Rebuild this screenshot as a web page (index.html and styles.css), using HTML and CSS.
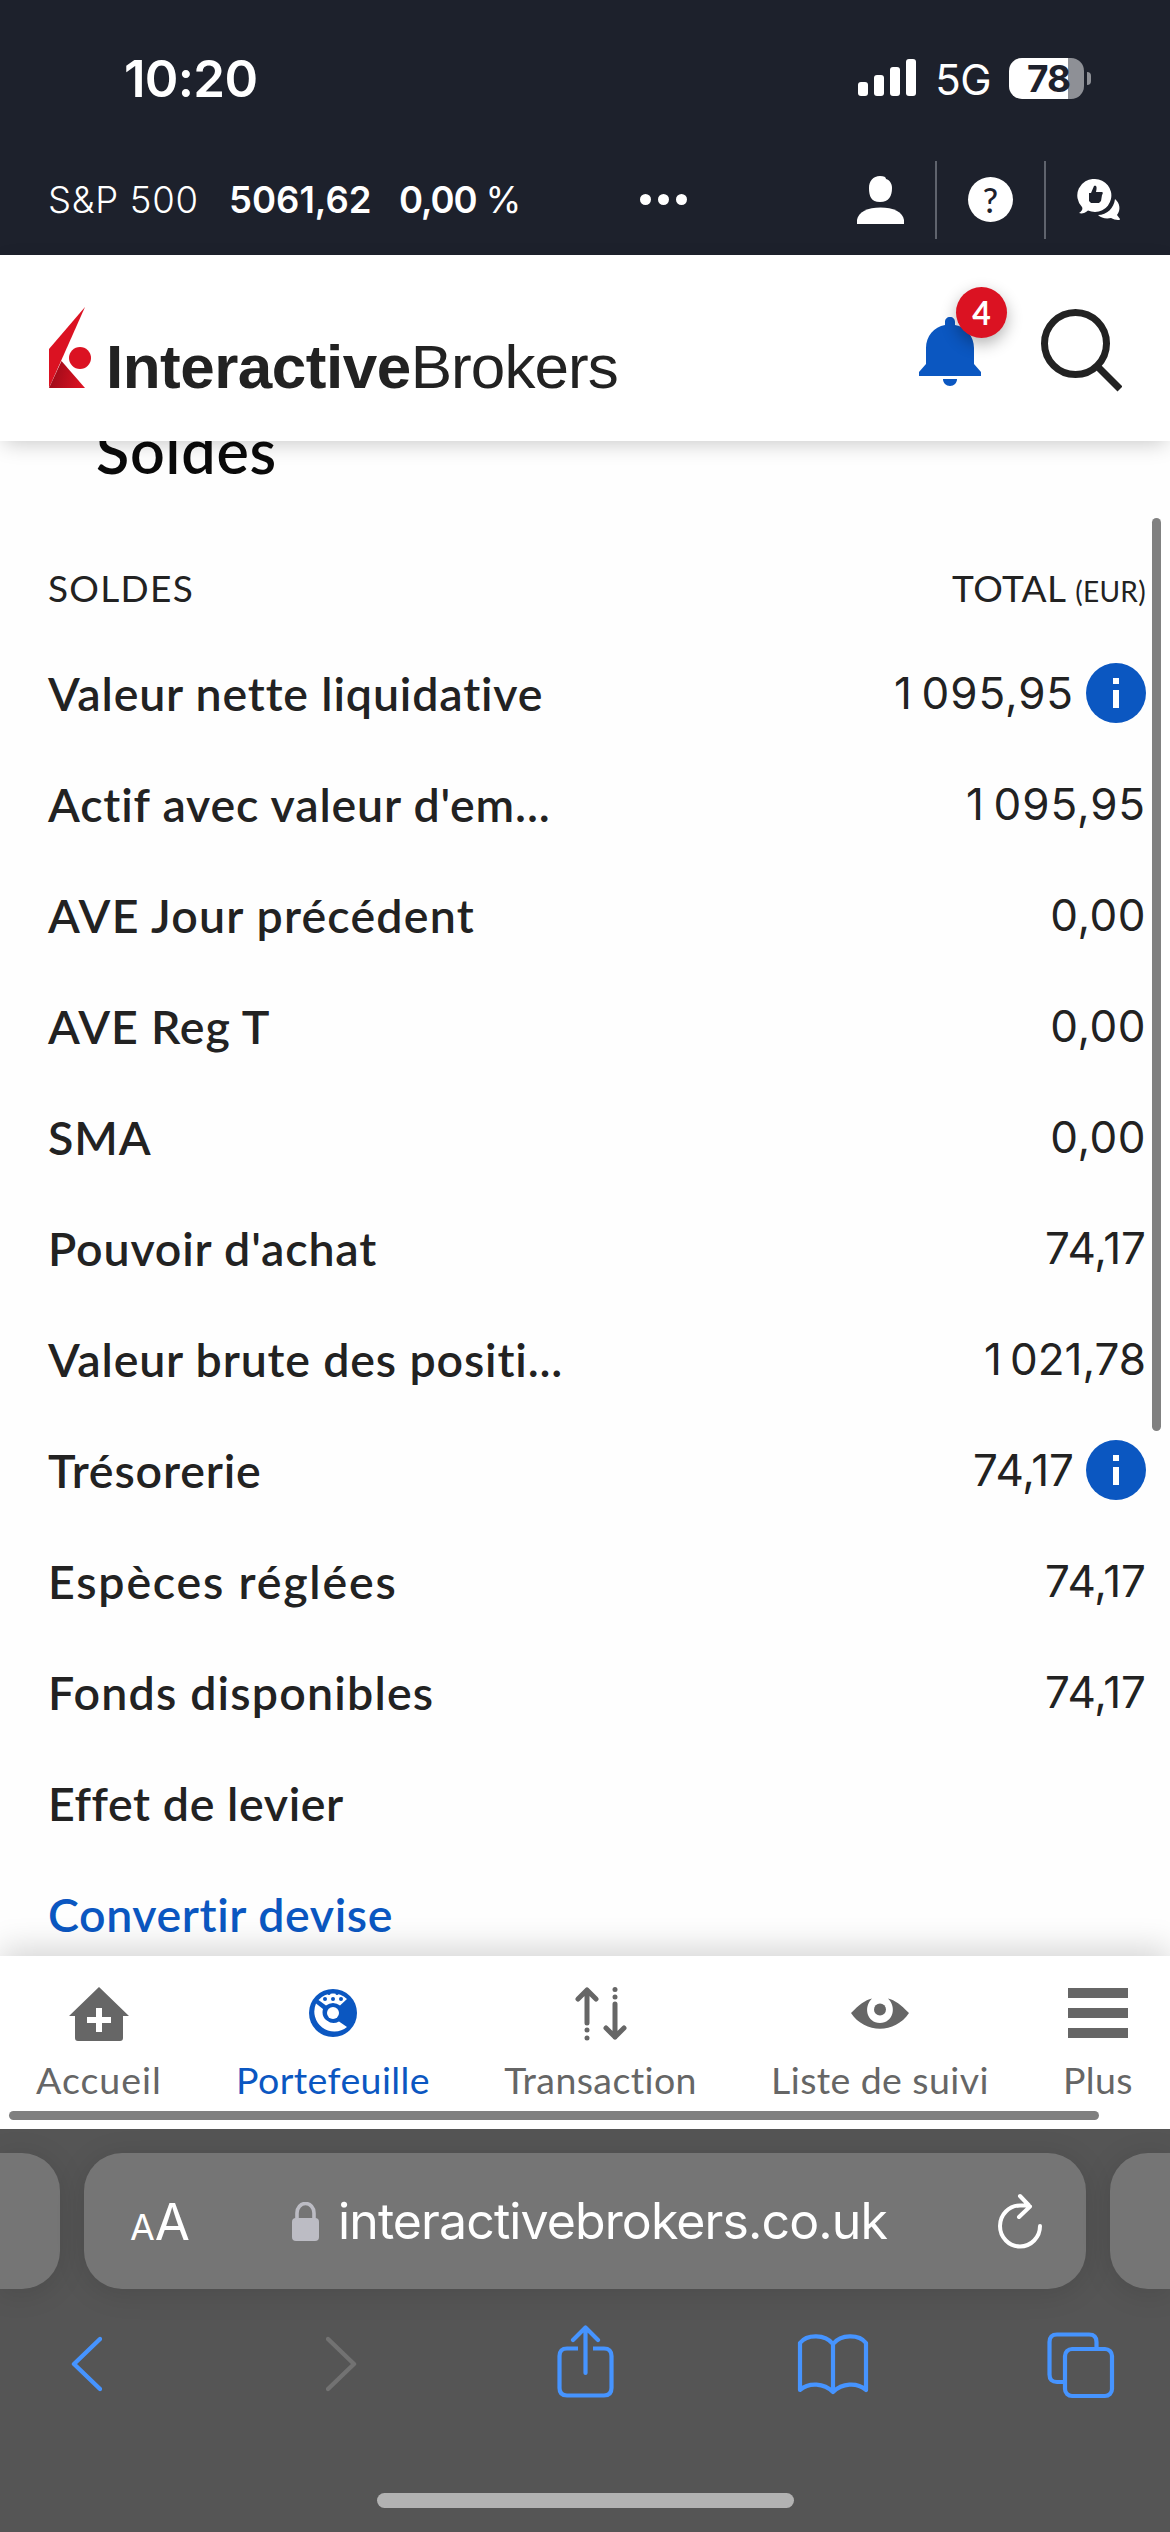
FILE: index.html
```html
<!DOCTYPE html>
<html lang="fr">
<head>
<meta charset="utf-8">
<title>Portefeuille</title>
<link rel="stylesheet" href="styles.css">
</head>
<body>
<div class="status">
  <span class="clock">10:20</span>
  <div class="status-right">
    <svg class="signal" width="58" height="38" viewBox="0 0 58 38" fill="#fff"><rect y="23" width="10" height="14" rx="3"/><rect x="16" y="16" width="10" height="21" rx="3"/><rect x="32" y="8" width="10" height="29" rx="3"/><rect x="48" width="10" height="37" rx="3"/></svg>
    <span class="network">5G</span>
    <div class="battery"><span class="level">78</span></div>
    <span class="nub"></span>
  </div>
</div>
<div class="ticker">
  <span class="t-name">S&amp;P 500</span>
  <span class="t-price">5061,62</span>
  <span class="t-change"><b>0,00</b> %</span>
  <span class="dots"><i></i><i></i><i></i></span>
  <div class="tools">
    <span class="tool"><svg width="47" height="48" viewBox="0 0 47 48" fill="#fff"><path d="M23 0c4 0 6 1 6 3 4 1 6 5 6 9 0 8-3 14-12 14S12 20 12 12C12 5 16 0 23 0z"/><path d="M0 48V44C1 36 11 31.500 23.500 31.500S46 36 47 44v4z"/></svg></span>
    <span class="tool"><span class="help">?</span></span>
    <span class="tool"><svg width="44" height="42" viewBox="0 0 44 42"><path d="M38 20c5 4 6 11 2 16l3 4c0 1-1 1-2 1-2 0-5-1-7-2-5 1-10 0-13-3 9 0 16-7 17-16z" fill="#fff"/><path d="M18 0a16.500 16.500 0 1 1-7 31.500C8 34 5 35 2 34c3-2 4-4 3-6A16.500 16.500 0 0 1 18 0z" fill="#fff"/><path d="M12 14h2l3-7c3-1 3 2 2 6h6c1 0 1 2 0 3l-1 6-2 2h-8l-2-2z" fill="#1d212c"/></svg></span>
  </div>
</div>
<header class="header">
  <div class="brand">
    <svg class="mark" width="43" height="82" viewBox="0 0 43 82"><defs><linearGradient id="g" x1="0" y1="0.300" x2="1" y2="0.500"><stop offset="0" stop-color="#980a18"/><stop offset="1" stop-color="#db1222"/></linearGradient></defs><path d="M36 0 0 42v39L12 54z" fill="#db1222"/><path d="M12.500 54 0 81h36z" fill="url(#g)"/><circle cx="31" cy="51" r="11" fill="#db1222"/></svg>
    <span class="wordmark"><b>Interactive</b><span>Brokers</span></span>
  </div>
  <div class="actions">
    <div class="bell">
      <svg width="62" height="69" viewBox="0 0 62 69" fill="#0b57c1"><path d="M31 0c3 0 5 2 5 5v3c11 2 19 11 19 23v16l7 8v4H0v-4l7-8V31C7 19 15 10 26 8V5c0-3 2-5 5-5z"/><path d="M24 62h14c0 4-3 7-7 7s-7-3-7-7z"/></svg>
      <span class="badge">4</span>
    </div>
    <svg class="search" width="81" height="83" viewBox="0 0 81 83" fill="none" stroke="#222" stroke-width="7"><circle cx="34.500" cy="34.500" r="31"/><path d="M57 58 79 80"/></svg>
  </div>
</header>
<main class="content">
  <h1>Soldes</h1>
  <div class="thead"><span class="th-label">SOLDES</span><span class="th-total">TOTAL <small>(EUR)</small></span></div>
  <div class="row"><span class="label">Valeur nette liquidative</span><span class="val"><span class="wide">1&#8201;095,95</span><i class="info"></i></span></div>
  <div class="row"><span class="label">Actif avec valeur d'em...</span><span class="val"><span class="wide">1&#8201;095,95</span></span></div>
  <div class="row"><span class="label loose">AVE Jour précédent</span><span class="val"><span class="zero">0,00</span></span></div>
  <div class="row"><span class="label">AVE Reg T</span><span class="val"><span class="zero">0,00</span></span></div>
  <div class="row"><span class="label">SMA</span><span class="val"><span class="zero">0,00</span></span></div>
  <div class="row"><span class="label">Pouvoir d'achat</span><span class="val"><span>74,17</span></span></div>
  <div class="row"><span class="label">Valeur brute des positi...</span><span class="val"><span>1&#8201;021,78</span></span></div>
  <div class="row"><span class="label">Trésorerie</span><span class="val"><span>74,17</span><i class="info"></i></span></div>
  <div class="row"><span class="label looser">Espèces réglées</span><span class="val"><span>74,17</span></span></div>
  <div class="row"><span class="label loose">Fonds disponibles</span><span class="val"><span>74,17</span></span></div>
  <div class="row"><span class="label tight">Effet de levier</span></div>
  <div class="row link"><span class="label tight">Convertir devise</span></div>
  <i class="vscroll"></i>
</main>
<nav class="nav">
  <a class="item first"><svg width="60" height="56" viewBox="0 0 60 56" fill="#666"><path d="M30 0 60 29H54V51q0 3-3 3H9q-3 0-3-3V29H0z"/><path d="M27 21h6v9h9v6h-9v9h-6v-9h-9v-6h9z" fill="#fff"/></svg><span>Accueil</span></a>
  <a class="item active"><svg width="50" height="56" viewBox="0 0 50 56"><g transform="translate(1 2)"><circle cx="24" cy="24" r="24" fill="#0b57c1"/><path d="M9.500 11A20 20 0 0 1 38 10L31 16.500A11 11 0 0 0 17 16.500z" fill="#fff"/><path d="M7 14.500 14 20A11 11 0 0 0 30 32.500L38 38A20 20 0 0 1 7 14.500z" fill="#fff"/><circle cx="24" cy="24" r="6" fill="#fff"/><g fill="#0b57c1"><circle cx="16" cy="10" r="2"/><circle cx="24" cy="10" r="2"/><circle cx="32" cy="10" r="2"/><circle cx="20" cy="4.500" r="1.500"/><circle cx="28" cy="4.500" r="1.500"/></g></g></svg><span>Portefeuille</span></a>
  <a class="item"><svg width="52" height="56" viewBox="0 0 52 56" fill="none" stroke="#666" stroke-width="5" stroke-linecap="round" stroke-linejoin="round"><path d="M12 3V36M3 12l9-9 9 9M40 17v33M31 41l9 9 9-9"/><g fill="#666" stroke="none"><circle cx="12" cy="43" r="2.500"/><circle cx="12" cy="51" r="2.500"/><circle cx="40" cy="2.500" r="2.500"/><circle cx="40" cy="10" r="2.500"/></g></svg><span>Transaction</span></a>
  <a class="item"><svg width="58" height="56" viewBox="0 0 58 56"><path d="M0 26C8 18 14 13 21 11.500 12 20 16 36 29 36S46 20 37 11.500C44 13 50 18 58 26 44 47 14 47 0 26z" fill="#666"/><circle cx="29" cy="22.500" r="6" fill="#666"/></svg><span>Liste de suivi</span></a>
  <a class="item"><svg width="60" height="56" viewBox="0 0 60 56" fill="#666"><path d="M0 1h60v10H0zM0 21h60v10H0zM0 41h60v10H0z"/></svg><span>Plus</span></a>
  <i class="hscroll"></i>
</nav>
<footer class="safari">
  <div class="tabs">
    <span class="pill side left"></span>
    <div class="pill main">
      <span class="aa"><small>A</small>A</span>
      <span class="url"><svg width="28" height="39" viewBox="0 0 28 39"><rect y="16" width="27" height="23" rx="4" fill="#bcbcc4"/><path d="M5 18V11a8.500 9.500 0 0 1 17 0V18" fill="none" stroke="#bcbcc4" stroke-width="3.600"/></svg><span>interactivebrokers.co.uk</span></span>
      <svg width="46" height="56" viewBox="0 0 46 56" fill="none" stroke="#fff" stroke-width="4" stroke-linecap="round" stroke-linejoin="round"><path d="M42 33a20 20.500 0 1 1-20-20.500H31M22 3 32 13.500 21 24"/></svg>
    </div>
    <span class="pill side right"></span>
  </div>
  <div class="toolbar">
    <svg width="31" height="76" viewBox="0 0 31 76" fill="none" stroke="#4694ff" stroke-width="4.400" stroke-linecap="round" stroke-linejoin="round"><path d="M29 14 3 39 29 64"/></svg>
    <svg class="forward" width="31" height="76" viewBox="0 0 31 76" fill="none" stroke="#727272" stroke-width="4.400" stroke-linecap="round" stroke-linejoin="round"><path d="M2 14 28 39 2 64"/></svg>
    <svg class="share" width="57" height="76" viewBox="0 0 57 76" fill="none" stroke="#4694ff" stroke-width="4.200" stroke-linejoin="round"><path d="M21 23.500H10q-7.500 0-7.500 7.500V63q0 7.500 7.500 7.500H47q7.500 0 7.500-7.500V31q0-7.500-7.500-7.500H36"/><path d="M28.500 48V3M16 15 28.500 2.500 41 15" stroke-linecap="round"/></svg>
    <svg class="book" width="72" height="76" viewBox="0 0 72 76" fill="none" stroke="#4694ff" stroke-width="4.200" stroke-linejoin="round"><path d="M36 19C28 9 10 9 3 18V65C12 57 27 58 36 67 45 58 60 57 69 65V18C62 9 44 9 36 19V67"/></svg>
    <svg class="stack" width="68" height="76" viewBox="0 0 68 76" fill="none" stroke="#4694ff" stroke-width="4.200"><rect x="18" y="24" width="47" height="47" rx="7"/><path d="M17 57H10q-7.500 0-7.500-7.500V17Q2.500 9.500 10 9.500H42q7.500 0 7.500 7.500V23"/></svg>
  </div>
  <span class="home"></span>
</footer>
</body>
</html>
```
FILE: styles.css
```css
* { box-sizing: border-box; }
body {
  margin: 0; width: 1170px; height: 2532px; overflow: hidden;
  display: flex; flex-direction: column;
  background: #fefefe; color: #222;
  font-family: Lato, "Liberation Sans", sans-serif;
}
svg { display: block; flex: none; }
.status {
  height: 148px; padding: 8px 79px 0 124px; background: #1d212c; color: #fff;
  display: flex; justify-content: space-between; align-items: center;
  font-family: Inter, sans-serif;
}
.clock { font-size: 51px; font-weight: 600; letter-spacing: -.7px; }
.status-right { display: flex; align-items: center; }
.network { font-size: 42px; margin: 2px 18px 0 19px; letter-spacing: -.6px; }
.battery {
  width: 75px; height: 41px; border-radius: 13px; color: #1d212c;
  background: linear-gradient(90deg, #fff 59px, #8e9096 59px);
  display: flex; justify-content: flex-end; align-items: center; padding-right: 14px;
}
.level { font-size: 37px; font-weight: 700; letter-spacing: -1px; }
.nub { width: 4px; height: 13px; margin-left: 3px; border-radius: 0 6px 6px 0; background: #8e9096; }
.ticker {
  height: 107px; padding: 0 49px 4px 48px; background: #1d212c; color: #fff;
  display: flex; align-items: center; font-size: 36.5px; white-space: nowrap; font-family: Inter, sans-serif;
}
.t-name { font-weight: 300; letter-spacing: .7px; width: 153px; }
.t-price { margin-left: 28px; font-weight: 600; letter-spacing: 0; width: 143px; }
.t-change { margin-left: 27px; letter-spacing: -1.1px; width: 120px; }
.t-change b { font-weight: 600; }
.dots { display: flex; gap: 7px; margin-left: 121px; }
.dots i { width: 11px; height: 11px; border-radius: 50%; background: #fff; }
.tools { margin-left: auto; display: flex; align-items: center; }
.tool { height: 78px; display: flex; align-items: center; }
.tool + .tool { border-left: 2px solid #5f636d; margin-left: 31px; padding-left: 31px; }
.help {
  width: 45px; height: 45px; border-radius: 50%; background: #fff; color: #1d212c;
  display: flex; justify-content: center; align-items: center; font: 500 34px Lato, sans-serif;
}
.header {
  position: relative; z-index: 2; height: 186px; padding: 2px 48px 0 49px; background: #fff;
  box-shadow: 0 6px 20px -4px rgba(0,0,0,.22);
  display: flex; justify-content: space-between; align-items: center;
}
.brand { display: flex; align-items: flex-end; gap: 14px; }
.mark { margin-bottom: 2px; }
.wordmark { font: 62px/62px "Liberation Sans", sans-serif; white-space: nowrap; margin-bottom: -7px; letter-spacing: -.9px; }
.wordmark b { letter-spacing: -.5px; }
.actions { display: flex; align-items: center; gap: 60px; }
.search { margin-top: 3px; }
.bell { position: relative; padding-top: 5px; }
.badge {
  position: absolute; left: 37px; top: -25px; width: 51px; height: 51px; border-radius: 50%;
  background: #db1222; color: #fff; box-shadow: 0 6px 16px rgba(0,0,0,.3);
  display: flex; justify-content: center; align-items: center; font-size: 32px; font-weight: 700;
}
.content { position: relative; height: 1515px; overflow: hidden; }
h1 { margin: 0; height: 97px; padding: 0 96px; font-size: 61px; line-height: 19px; font-weight: 600; color: #0a0a0a; letter-spacing: .8px; }
.thead {
  height: 99px; padding: 0 24px 0 48px; display: flex; justify-content: space-between; align-items: center;
  font-size: 37px;
}
.th-label { letter-spacing: 1.3px; }
.th-total { letter-spacing: .4px; }
.thead small { font-size: 28px; letter-spacing: .3px; }
.row {
  height: 111px; padding: 0 24px 0 48px; display: flex; justify-content: space-between; align-items: center;
  font-size: 46.5px; font-weight: 600; white-space: nowrap;
}
.label { letter-spacing: .85px; }
.loose { letter-spacing: 1.2px; }
.looser { letter-spacing: 1.8px; }
.tight { letter-spacing: .6px; }
.val { display: flex; align-items: center; gap: 12px; font: 400 44px Inter, sans-serif; padding-top: 1px; }
.wide { letter-spacing: .9px; }
.zero { letter-spacing: .5px; }
.info {
  width: 60px; height: 60px; border-radius: 50%;
  background: linear-gradient(#fff,#fff) 27px 15px/6px 6px no-repeat, linear-gradient(#fff,#fff) 27px 27px/6px 18px no-repeat, #0b57c1;
}
.link { color: #0b57c1; }
.vscroll { position: absolute; right: 9px; top: 77px; width: 9px; height: 913px; border-radius: 5px; background: #808080; }
.nav {
  position: relative; z-index: 2; height: 173px; padding: 31px 37px 0 36px; background: #fff;
  box-shadow: 0 -8px 30px rgba(0,0,0,.16);
  display: flex; justify-content: space-between; align-items: flex-start;
}
.item { display: flex; flex-direction: column; align-items: center; gap: 14px; font-size: 37.5px; line-height: 46px; color: #666; letter-spacing: .4px; }
.first span { letter-spacing: 1px; }
.active { color: #0b57c1; }
.hscroll { position: absolute; left: 9px; top: 155px; width: 1090px; height: 9px; border-radius: 5px; background: #808080; }
.safari { position: relative; z-index: 3; height: 403px; background: #555; display: flex; flex-direction: column; align-items: center; }
.tabs { width: 100%; padding-top: 24px; display: flex; gap: 24px; }
.pill { height: 136px; background: #757575; box-shadow: 0 4px 30px rgba(0,0,0,.12); }
.side { width: 60px; }
.left { border-radius: 0 38px 38px 0; }
.right { border-radius: 38px 0 0 38px; }
.main {
  flex: 1; border-radius: 38px; padding: 0 42px 0 46px; color: #fff;
  display: flex; justify-content: space-between; align-items: center; font-family: Inter, sans-serif;
}
.aa { font-size: 51px; }
.aa small { font-size: 36px; }
.url { display: flex; align-items: center; gap: 18px; font-size: 50px; letter-spacing: -.9px; margin-right: 9px; }
.toolbar { width: 100%; padding: 36px 57px 0 71px; display: flex; }
.forward { margin-left: 224px; }
.share { margin-left: 200px; }
.book { margin-left: 183px; }
.stack { margin-left: 178px; }
.home { margin-top: 92px; width: 417px; height: 15px; border-radius: 8px; background: #b2b2b2; }
```
